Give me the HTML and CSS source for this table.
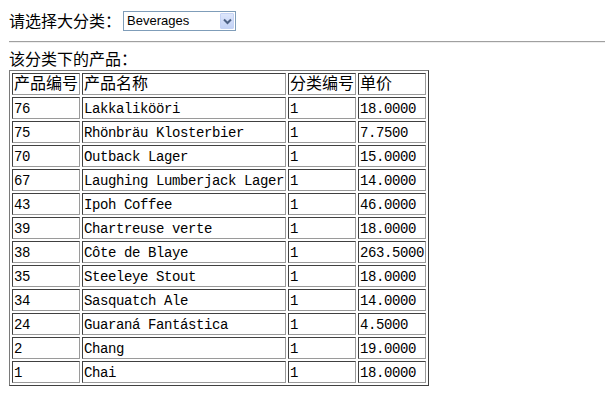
FILE: index.html
```
<!DOCTYPE html>
<html>
<head>
<meta charset="utf-8">
<link rel="stylesheet" href="styles.css">
</head>
<body>
<div class="page">
  <div class="top">
    <span class="cjk">请选择大分类：</span>
    <div class="selectbox">
      <span class="selval">Beverages</span>
      <span class="selbtn">
        <svg width="9" height="7" viewBox="0 0 9 7"><path d="M1 1.5 L4.5 5 L8 1.5" fill="none" stroke="#4d6185" stroke-width="2"/></svg>
      </span>
    </div>
  </div>
  <div class="rule"></div>
  <div class="label cjk">该分类下的产品：</div>
  <table class="grid">
    <tr class="head"><td>产品编号</td><td>产品名称</td><td>分类编号</td><td>单价</td></tr>
    <tr><td>76</td><td>Lakkalikööri</td><td>1</td><td>18.0000</td></tr>
    <tr><td>75</td><td>Rhönbräu Klosterbier</td><td>1</td><td>7.7500</td></tr>
    <tr><td>70</td><td>Outback Lager</td><td>1</td><td>15.0000</td></tr>
    <tr><td>67</td><td>Laughing Lumberjack Lager</td><td>1</td><td>14.0000</td></tr>
    <tr><td>43</td><td>Ipoh Coffee</td><td>1</td><td>46.0000</td></tr>
    <tr><td>39</td><td>Chartreuse verte</td><td>1</td><td>18.0000</td></tr>
    <tr><td>38</td><td>Côte de Blaye</td><td>1</td><td>263.5000</td></tr>
    <tr><td>35</td><td>Steeleye Stout</td><td>1</td><td>18.0000</td></tr>
    <tr><td>34</td><td>Sasquatch Ale</td><td>1</td><td>14.0000</td></tr>
    <tr><td>24</td><td>Guaraná Fantástica</td><td>1</td><td>4.5000</td></tr>
    <tr><td>2</td><td>Chang</td><td>1</td><td>19.0000</td></tr>
    <tr><td>1</td><td>Chai</td><td>1</td><td>18.0000</td></tr>
  </table>
</div>
</body>
</html>
```
FILE: styles.css
```
html, body {
  margin: 0;
  padding: 0;
  background: #ffffff;
  color: #000000;
}
.page {
  padding: 11px 9px 0 9px;
}
.cjk {
  font-family: "Noto Sans CJK SC", "Noto Sans", sans-serif;
  font-size: 16px;
  line-height: 18px;
}
.top {
  display: flex;
  align-items: center;
  height: 20px;
}
.top .cjk {
  width: 114px;
  line-height: 16px;
  padding-bottom: 2px;
}
.selectbox {
  display: flex;
  align-items: center;
  width: 111px;
  height: 18px;
  border: 1px solid #7f9db9;
  background: #ffffff;
}
.selval {
  flex: 1;
  font-family: "Liberation Sans", Arial, sans-serif;
  font-size: 13px;
  padding-left: 3px;
  line-height: 18px;
}
.selbtn {
  width: 14px;
  height: 16px;
  margin-right: 1px;
  display: flex;
  align-items: center;
  justify-content: center;
  background: linear-gradient(#dde6fb, #c3d2f6);
  border: 1px solid #c5d3f5;
  box-sizing: border-box;
  border-radius: 1px;
}
.rule {
  margin-top: 10px;
  width: 596px;
  height: 1px;
  background: #a0a0a0;
  border-bottom: 1px solid #eeeeee;
}
.label {
  margin-top: 8px;
  height: 19px;
  line-height: 14px;
}
.grid {
  border: 1px solid #555555;
  border-color: #7a7a7a #404040 #404040 #7a7a7a;
  border-spacing: 2px;
  margin: 0;
}
.grid td {
  border: 1px solid;
  border-color: #404040 #9a9a9a #9a9a9a #404040;
  padding: 2px 1px 0 1px;
  height: 18px;
  line-height: 18px;
  white-space: nowrap;
  vertical-align: middle;
  font-family: "Liberation Mono", "DejaVu Sans Mono", monospace;
  font-size: 14px;
  letter-spacing: -0.4px;
}
.grid .head td {
  font-family: "Noto Sans CJK SC", sans-serif;
  font-size: 16px;
  letter-spacing: 0;
  padding: 0 1px 2px 1px;
  line-height: 16px;
  vertical-align: top;
}
```
